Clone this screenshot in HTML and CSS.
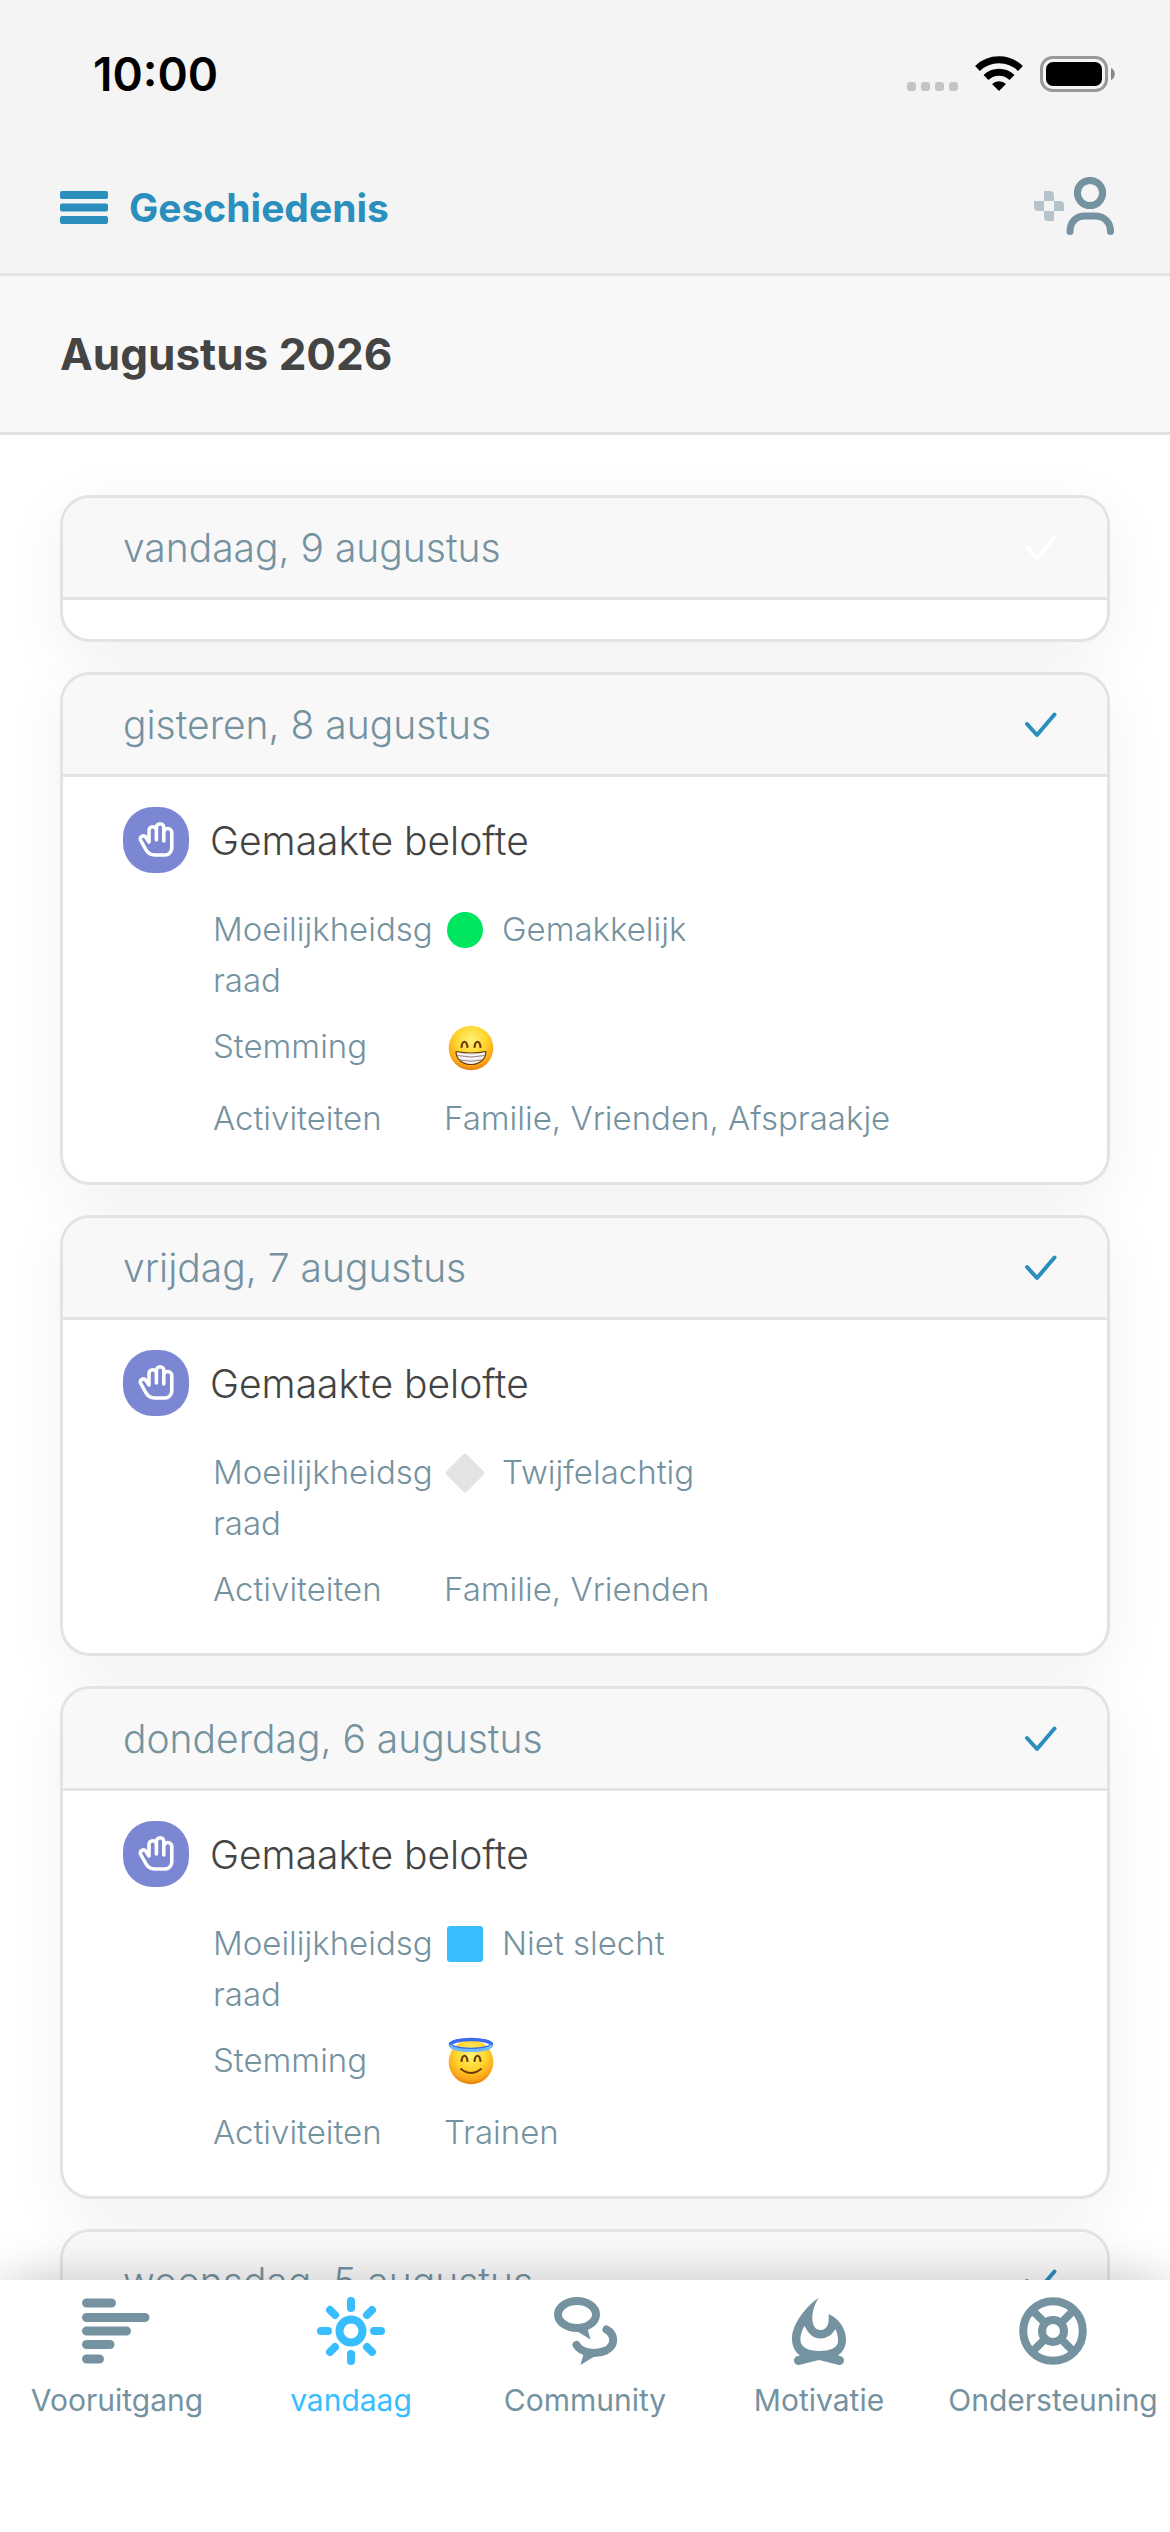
FILE: index.html
```html
<!DOCTYPE html>
<html lang="nl">
<head>
    <meta charset="UTF-8">
    <meta name="viewport" content="width=device-width, initial-scale=1.0">
    <title>Geschiedenis</title>
    <link rel="stylesheet" href="styles.css">
</head>
<body>
    <!-- Iconen die vaker terugkomen -->
    <svg class="sprite" aria-hidden="true">
        <symbol id="check" viewBox="0 0 32 26">
            <path d="M2 12L12 23L29.500 2.500" fill="none" stroke="currentColor" stroke-width="4" stroke-linecap="round" stroke-linejoin="round"/>
        </symbol>
        <symbol id="hand" viewBox="0 0 66 66">
            <path d="M26 35V23.500a3.700 3.700 0 0 1 7.400 0V33V20.500a3.700 3.700 0 0 1 7.400 0V34V25.500a4 4 0 0 1 8 0V41a7 7 0 0 1-7 7H32c-5 0-7.500-2-9.500-6l-5-9c-1-4 4-5.500 5.500-2.500L26 35" fill="none" stroke="#fff" stroke-width="3.600" stroke-linecap="round" stroke-linejoin="round"/>
        </symbol>
        <radialGradient id="face" cx="50%" cy="32%" r="68%">
            <stop offset="0" stop-color="#fff27a"/>
            <stop offset="0.500" stop-color="#ffd52e"/>
            <stop offset="0.850" stop-color="#fba51a"/>
            <stop offset="1" stop-color="#e07c08"/>
        </radialGradient>
    </svg>

    <header class="top">
        <div class="status">
            <span class="time">10:00</span>
            <svg class="status-icons" viewBox="0 0 208 38" aria-hidden="true">
                <g fill="#c4c4c4">
                    <rect x="0" y="27" width="9" height="9" rx="3"/>
                    <rect x="14" y="27" width="9" height="9" rx="3"/>
                    <rect x="28" y="27" width="9" height="9" rx="3"/>
                    <rect x="42" y="27" width="9" height="9" rx="3"/>
                </g>
                <g fill="none" stroke="#000" stroke-width="7">
                    <path d="M70.500 13.500a31 31 0 0 1 43 0"/>
                    <path d="M79 22.500a18.500 18.500 0 0 1 26 0"/>
                </g>
                <path d="M92 36l-7-7a10 10 0 0 1 14 0z"/>
                <rect x="134.500" y="2.500" width="65" height="33" rx="11" fill="none" stroke="#999" stroke-width="3"/>
                <rect x="139" y="7" width="56" height="24" rx="7"/>
                <path d="M204 13c5 2 5 10 0 12z" fill="#888"/>
            </svg>
        </div>
        <div class="nav">
            <button class="menu-button" type="button">
                <svg class="menu-icon" viewBox="0 0 48 33" aria-hidden="true">
                    <rect width="48" height="8" rx="2"/>
                    <rect y="12.500" width="48" height="8" rx="2"/>
                    <rect y="25" width="48" height="8" rx="2"/>
                </svg>
                Geschiedenis
            </button>
            <button class="profile-button" type="button" aria-label="Profiel">
                <svg class="profile-icon" viewBox="0 0 80 60" aria-hidden="true">
                    <g fill="#b5c4ca">
                        <path d="M10 14h6a4 4 0 0 1 4 4v6H10z"/>
                        <path d="M0 24h10v10H4a4 4 0 0 1-4-4z"/>
                        <path d="M20 24h6a4 4 0 0 1 4 4v6H20z"/>
                        <path d="M10 34h10v10h-6a4 4 0 0 1-4-4z"/>
                    </g>
                    <g fill="none" stroke="#7592a0" stroke-width="7" stroke-linecap="round">
                        <circle cx="56" cy="16" r="12.600"/>
                        <path d="M36 54.500C36 45 42 39 51 39h10c9 0 15.500 6 15.500 15.500"/>
                    </g>
                </svg>
            </button>
        </div>
    </header>

    <h1 class="month">Augustus 2026</h1>

    <main class="days">
        <section class="card">
            <div class="card-header">
                <h2 class="date">vandaag, 9 augustus</h2>
                <svg class="check check-open"><use href="#check"/></svg>
            </div>
            <div class="card-body card-empty"></div>
        </section>

        <section class="card">
            <div class="card-header">
                <h2 class="date">gisteren, 8 augustus</h2>
                <svg class="check"><use href="#check"/></svg>
            </div>
            <div class="card-body">
                <h3 class="promise"><svg class="hand"><use href="#hand"/></svg>Gemaakte belofte</h3>
                <dl class="details">
                    <dt>Moeilijkheidsgraad</dt>
                    <dd><span class="shape circle"></span>Gemakkelijk</dd>
                    <dt>Stemming</dt>
                    <dd class="mood">
                        <svg class="emoji" viewBox="0 0 54 57" role="img" aria-label="Grijnzend gezicht">
                            <circle cx="27" cy="27" r="22.300" fill="url(#face)"/>
                            <path d="M17.500 26c1-7 5-7 6 0M30.500 26c1-7 5-7 6 0" fill="none" stroke="#6b3c06" stroke-width="2.200" stroke-linecap="round"/>
                            <path d="M12 30.500q15 3 30 0c0 8-7 13-15 13s-15-5-15-13z" fill="#f2f2f6" stroke="#6b3c06" stroke-width="1.200" stroke-linejoin="round"/>
                            <path d="M13 34.500q14 3 28 0M16 39q11 2.500 22 0" fill="none" stroke="#9a8279" stroke-width="1"/>
                        </svg>
                    </dd>
                    <dt>Activiteiten</dt>
                    <dd>Familie, Vrienden, Afspraakje</dd>
                </dl>
            </div>
        </section>

        <section class="card">
            <div class="card-header">
                <h2 class="date">vrijdag, 7 augustus</h2>
                <svg class="check"><use href="#check"/></svg>
            </div>
            <div class="card-body">
                <h3 class="promise"><svg class="hand"><use href="#hand"/></svg>Gemaakte belofte</h3>
                <dl class="details">
                    <dt>Moeilijkheidsgraad</dt>
                    <dd><span class="shape diamond"></span>Twijfelachtig</dd>
                    <dt>Activiteiten</dt>
                    <dd>Familie, Vrienden</dd>
                </dl>
            </div>
        </section>

        <section class="card">
            <div class="card-header">
                <h2 class="date">donderdag, 6 augustus</h2>
                <svg class="check"><use href="#check"/></svg>
            </div>
            <div class="card-body">
                <h3 class="promise"><svg class="hand"><use href="#hand"/></svg>Gemaakte belofte</h3>
                <dl class="details">
                    <dt>Moeilijkheidsgraad</dt>
                    <dd><span class="shape square"></span>Niet slecht</dd>
                    <dt>Stemming</dt>
                    <dd class="mood">
                        <svg class="emoji" viewBox="0 0 54 57" role="img" aria-label="Gezicht met aureool">
                            <circle cx="27" cy="27" r="22.300" fill="url(#face)"/>
                            <path d="M17.500 26c1-7 5-7 6 0M30.500 26c1-7 5-7 6 0" fill="none" stroke="#6b3c06" stroke-width="2.200" stroke-linecap="round"/>
                            <path d="M17 34q10 8 20 0" fill="none" stroke="#6b3c06" stroke-width="2" stroke-linecap="round"/>
                            <ellipse cx="27" cy="9.500" rx="20.500" ry="5" fill="none" stroke="#3a6cec" stroke-width="3.500"/>
                            <path d="M7 11c3 6 37 6 40 0" fill="none" stroke="#6db9fb" stroke-width="3" stroke-linecap="round"/>
                        </svg>
                    </dd>
                    <dt>Activiteiten</dt>
                    <dd>Trainen</dd>
                </dl>
            </div>
        </section>

        <section class="card">
            <div class="card-header">
                <h2 class="date">woensdag, 5 augustus</h2>
                <svg class="check"><use href="#check"/></svg>
            </div>
            <div class="card-body card-empty"></div>
        </section>
    </main>

    <nav class="tabs">
        <a href="#vooruitgang" class="tab">
            <svg class="tab-icon" viewBox="0 0 68 68" aria-hidden="true">
                <g fill="none" stroke="currentColor" stroke-width="9" stroke-linecap="round">
                    <path d="M3.500 6H28.500M3.500 20.500H62M3.500 34H43.500M3.500 47.500H27M3.500 62H16.500"/>
                </g>
            </svg>
            Vooruitgang
        </a>
        <a href="#vandaag" class="tab active">
            <svg class="tab-icon" viewBox="0 0 68 68" aria-hidden="true">
                <g fill="none" stroke="currentColor" stroke-width="8" stroke-linecap="round">
                    <circle cx="34" cy="34" r="11.500"/>
                    <path d="M34 4v7M34 57v7M4 34h7M57 34h7M13 13l5 5M50 50l5 5M13 55l5-5M50 18l5-5"/>
                </g>
            </svg>
            vandaag
        </a>
        <a href="#community" class="tab">
            <svg class="tab-icon" viewBox="0 0 68 68" aria-hidden="true">
                <g fill="none" stroke="currentColor" stroke-width="8" stroke-linecap="round">
                    <ellipse cx="26" cy="17.500" rx="19" ry="13.500"/>
                    <path d="M55.500 32.500C65 38 64 49 55 53.500C44 58.500 30 55.500 25.500 48"/>
                </g>
                <path d="M24 33l15.500 9.500L36 30zM33 55l-3.500 13L45 58.500z" fill="currentColor"/>
            </svg>
            Community
        </a>
        <a href="#motivatie" class="tab">
            <svg class="tab-icon" viewBox="0 0 68 68" aria-hidden="true">
                <path fill="currentColor" fill-rule="evenodd" d="M33.500 1C24 7 7 25 7 42c0 7 3 13 8 16.500l-2 .5a4.500 4.500 0 0 0 1 9L34 63l20 5a4.500 4.500 0 0 0 1-9l-2-.500c5-3.500 8-9 8-16C61 31 53 21 43.500 17c1 9-1 16-8 16c-10 0-11-18-2-32zM19.500 29c4 8 9 12.500 16 12.500S47.500 37 50.500 32c2 5 3 9 2.500 13c-1 6-8 9-19 9S16 50 15.500 44c-.5-5 1-10 4-15z"/>
            </svg>
            Motivatie
        </a>
        <a href="#ondersteuning" class="tab">
            <svg class="tab-icon" viewBox="0 0 68 68" aria-hidden="true">
                <g fill="none" stroke="currentColor" stroke-width="8">
                    <circle cx="34" cy="34" r="29.800"/>
                    <circle cx="34" cy="34" r="11"/>
                    <path d="M14 14l12 12M42 42l12 12M14 54l12-12M42 26l12-12"/>
                </g>
            </svg>
            Ondersteuning
        </a>
    </nav>
</body>
</html>
```
FILE: styles.css
```css
* {
    box-sizing: border-box;
}

body {
    margin: 0;
    height: 100vh;
    display: flex;
    flex-direction: column;
    overflow: hidden;
    background-color: #ffffff;
    color: #7592a0;
    font-family: Inter, 'Liberation Sans', sans-serif;
}

h1, h2, h3, dl, dd {
    margin: 0;
}

button {
    padding: 0;
    border: none;
    background: none;
    font: inherit;
    cursor: pointer;
}

.sprite {
    position: absolute;
    width: 0;
    height: 0;
}

/* Bovenkant */
.top {
    background-color: #f4f4f4;
    border-bottom: 3px solid #e3e3e3;
}

.status {
    display: flex;
    justify-content: space-between;
    align-items: center;
    height: 141px;
    padding: 6px 55px 0 93px;
}

.time {
    color: #000000;
    font-size: 46px;
    font-weight: 600;
}

.status-icons {
    width: 208px;
    height: 38px;
}

.nav {
    display: flex;
    justify-content: space-between;
    align-items: center;
    height: 132px;
    padding: 0 56px 0 60px;
}

.menu-button {
    display: flex;
    align-items: center;
    gap: 21px;
    color: #2a8fbd;
    font-size: 39px;
    font-weight: 700;
}

.menu-icon {
    width: 48px;
    height: 33px;
    fill: currentColor;
}

.profile-icon {
    display: block;
    width: 80px;
    height: 60px;
}

.month {
    padding: 48px 60px;
    background-color: #f8f8f8;
    border-bottom: 3px solid #e3e3e3;
    color: #444444;
    font-size: 44px;
    font-weight: 700;
    line-height: 60px;
}

/* Dagen */
.days {
    flex: 1;
    min-height: 0;
    overflow: hidden;
    display: flex;
    flex-direction: column;
    gap: 30px;
    padding: 60px 60px 0;
}

.card {
    flex-shrink: 0;
    border: 3px solid #e3e3e3;
    border-radius: 30px;
    background-color: #ffffff;
    box-shadow: 0 15px 60px rgba(0, 0, 0, 0.06);
}

.card-header {
    display: flex;
    justify-content: space-between;
    align-items: center;
    height: 102px;
    padding: 0 50px 0 60px;
    background-color: #f8f8f8;
    border-bottom: 3px solid #e3e3e3;
    border-radius: 27px 27px 0 0;
}

.date {
    font-size: 39px;
    font-weight: 300;
}

.check {
    width: 32px;
    height: 26px;
    color: #2a8fbd;
}

.check-open {
    color: #ffffff;
}

.card-body {
    padding: 30px 60px 38px;
}

.card-empty {
    padding: 39px 0 0;
}

.promise {
    display: flex;
    align-items: center;
    gap: 21px;
    margin-bottom: 31px;
    color: #444444;
    font-size: 39px;
    font-weight: 300;
}

.hand {
    width: 66px;
    height: 66px;
    border-radius: 30px;
    background-color: #7c87d4;
}

.details {
    display: grid;
    grid-template-columns: 222px 1fr;
    gap: 15px 9px;
    padding-left: 90px;
    font-size: 33px;
    font-weight: 300;
    line-height: 51px;
}

.details dt {
    overflow-wrap: anywhere;
}

.details dd {
    display: flex;
    align-items: center;
    align-self: start;
}

.shape {
    width: 36px;
    height: 36px;
    margin: 0 19px 0 3px;
}

.circle {
    border-radius: 50%;
    background-color: #00e560;
}

.diamond {
    background-color: #e3e3e3;
    border-radius: 3px;
    transform: rotate(45deg) scale(0.8);
}

.square {
    border-radius: 3px;
    background-color: #38bdff;
}

.emoji {
    width: 54px;
    height: 57px;
}

/* Tabbalk */
.tabs {
    position: relative;
    display: flex;
    padding: 17px 0 109px;
    background-color: #ffffff;
    box-shadow: 0 0 45px rgba(0, 0, 0, 0.2);
}

.tab {
    flex: 1 1 0;
    display: flex;
    flex-direction: column;
    align-items: center;
    gap: 13px;
    color: #7592a0;
    font-size: 30px;
    line-height: 45px;
    text-decoration: none;
}

.tab.active {
    color: #38bdff;
}

.tab-icon {
    width: 68px;
    height: 68px;
    overflow: visible;
}
```
